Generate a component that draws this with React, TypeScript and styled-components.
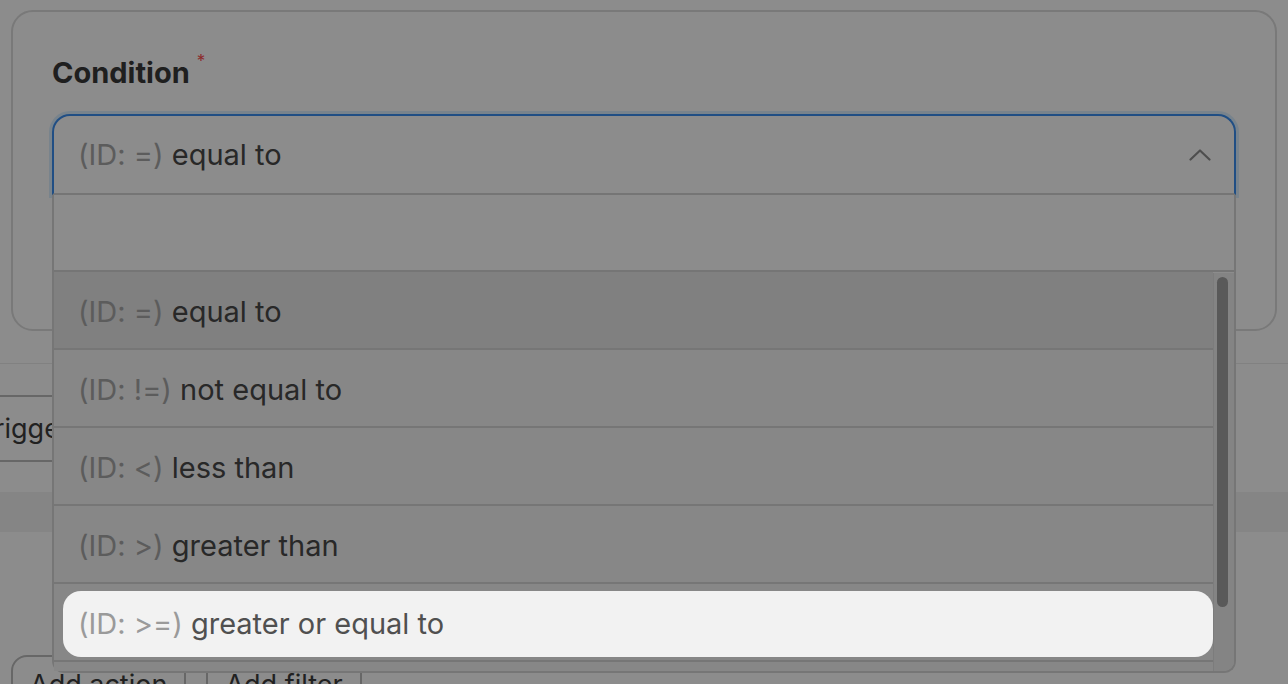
import styled, { createGlobalStyle } from 'styled-components'

const GlobalStyle = createGlobalStyle`
  html, body {
    margin: 0;
    padding: 0;
    background: #ffffff;
    overflow: hidden;
  }
  body {
    font-family: Inter, "Noto Sans", "Liberation Sans", sans-serif;
    font-feature-settings: "calt" 0;
    -webkit-font-smoothing: antialiased;
  }
  * {
    box-sizing: border-box;
  }
`

interface Condition {
  id: string
  label: string
}

const conditions: Condition[] = [
  { id: '=', label: 'equal to' },
  { id: '!=', label: 'not equal to' },
  { id: '<', label: 'less than' },
  { id: '>', label: 'greater than' },
  { id: '>=', label: 'greater or equal to' },
  { id: '<=', label: 'less or equal to' },
]

export default function App() {
  const selected = '='
  const focused = '>='

  return (
    <Page>
      <GlobalStyle />
      <Card>
        <Label>
          Condition<Required>*</Required>
        </Label>
        <SelectWrap>
          <SelectBox>
            <Value>
              <Prefix>(ID: {selected})</Prefix> equal to
            </Value>
            <Chevron width="22" height="12" viewBox="0 0 22 12">
              <polyline points="1.5,10.5 11,1.5 20.5,10.5" />
            </Chevron>
          </SelectBox>
          <Dropdown>
            <Search>
              <SearchInput aria-label="Search conditions" />
            </Search>
            <ListArea>
              <Options>
                {conditions.map((c) => (
                  <Option key={c.id} $selected={c.id === selected}>
                    <OptionInner $spot={c.id === focused}>
                      <Prefix $spot={c.id === focused}>(ID: {c.id})</Prefix>&nbsp;{c.label}
                    </OptionInner>
                  </Option>
                ))}
              </Options>
              <Track>
                <Thumb />
              </Track>
            </ListArea>
          </Dropdown>
        </SelectWrap>
      </Card>

      <Divider />
      <TabBar>
        <TabButton>Trigger</TabButton>
      </TabBar>
      <Band />
      <Actions>
        <ActionButton>Add action</ActionButton>
        <ActionButton>Add filter</ActionButton>
      </Actions>

      <Backdrop />
    </Page>
  )
}

const Page = styled.div`
  width: 1288px;
  height: 684px;
  padding: 10px 11px 0;
  overflow: hidden;
  display: flex;
  flex-direction: column;
`

const Card = styled.section`
  flex-shrink: 0;
  border: 2px solid #dcdcdc;
  border-radius: 22px;
  padding: 44px 39px 134px;
  display: flex;
  flex-direction: column;
  gap: 24px;
`

const Label = styled.div`
  font-size: 29px;
  line-height: 34px;
  font-weight: 700;
  color: #3a3a3a;
`

const Required = styled.span`
  font-size: 17px;
  line-height: 0;
  font-weight: 400;
  color: #ff4d4f;
  margin-left: 7px;
  vertical-align: 16px;
`

const SelectWrap = styled.div`
  position: relative;
`

const SelectBox = styled.div`
  height: 81px;
  border: 2px solid #3b8ef0;
  border-bottom-color: #d6d6d6;
  border-radius: 18px 18px 0 0;
  box-shadow: 0 0 0 3px rgba(5, 145, 255, 0.15);
  display: flex;
  align-items: center;
  justify-content: space-between;
  padding: 0 23px 0 24px;
  background: #ffffff;
`

const Value = styled.div`
  font-size: 29px;
  color: #4a4a4a;
  white-space: pre;
`

const Prefix = styled.span<{ $spot?: boolean }>`
  color: ${(p) => (p.$spot ? '#9a9a9a' : '#a8a8a8')};
`

const Chevron = styled.svg`
  fill: none;
  stroke: #8f8f8f;
  stroke-width: 2.2;
  stroke-linecap: round;
  stroke-linejoin: round;
`

const Dropdown = styled.div`
  position: absolute;
  top: 100%;
  left: 0;
  right: 0;
  background: #ffffff;
  border: 2px solid #d8d8d8;
  border-top: none;
  border-radius: 0 0 12px 12px;
  display: flex;
  flex-direction: column;
`

const Search = styled.div`
  height: 77px;
  border-bottom: 2px solid #d6d6d6;
`

const SearchInput = styled.input`
  width: 100%;
  height: 100%;
  border: none;
  outline: none;
  background: transparent;
  font: inherit;
  font-size: 29px;
  padding: 0 24px;
`

const ListArea = styled.div`
  display: flex;
  height: 399px;
`

const Options = styled.div`
  flex: 1;
  overflow: hidden;
`

const Option = styled.div<{ $selected?: boolean }>`
  height: 78px;
  padding: 7px 0 3px 9px;
  border-bottom: 2px solid #d8d8d8;
  background: ${(p) => (p.$selected ? '#e9e9e9' : '#f6f6f6')};
`

const OptionInner = styled.div<{ $spot?: boolean }>`
  height: 66px;
  display: flex;
  align-items: center;
  padding: 0 0 2px 15px;
  font-size: 29px;
  white-space: pre;
  color: #4a4a4a;
  border-radius: 18px;
  ${(p) =>
    p.$spot &&
    `
    position: relative;
    z-index: 101;
    background: #f2f2f2;
    color: #505050;
  `}
`

const Track = styled.div`
  width: 21px;
  margin-top: 1px;
  background: #f0f0f0;
  border-left: 1px solid #e2e2e2;
  border-radius: 0 0 10px 0;
  padding: 4px 0 0 3px;
`

const Thumb = styled.div`
  width: 11px;
  height: 330px;
  border-radius: 6px;
  background: #a3a3a3;
`

const Divider = styled.div`
  flex-shrink: 0;
  height: 1px;
  background: #ececec;
  margin: 32px -11px 0;
`

const TabBar = styled.div`
  flex-shrink: 0;
  display: flex;
  margin: 31px 0 0 -53px;
`

const TabButton = styled.button`
  height: 67px;
  padding: 0 18px;
  border: 2px solid #bcbcbc;
  border-radius: 16px;
  background: #ffffff;
  font-family: inherit;
  font-size: 27px;
  color: #3d3d3d;
`

const Band = styled.div`
  flex-shrink: 0;
  height: 40px;
  background: #f2f2f2;
  margin: 30px -11px 0;
`

const Actions = styled.div`
  flex-shrink: 0;
  display: flex;
  gap: 20px;
  margin-top: 123px;
`

const ActionButton = styled.button`
  height: 58px;
  padding: 0 17px;
  border: 2px solid #bcbcbc;
  border-radius: 16px;
  background: #ffffff;
  font-family: inherit;
  font-size: 27px;
  color: #3d3d3d;
`

const Backdrop = styled.div`
  position: fixed;
  inset: 0;
  z-index: 100;
  background: rgba(0, 0, 0, 0.45);
  pointer-events: none;
`
